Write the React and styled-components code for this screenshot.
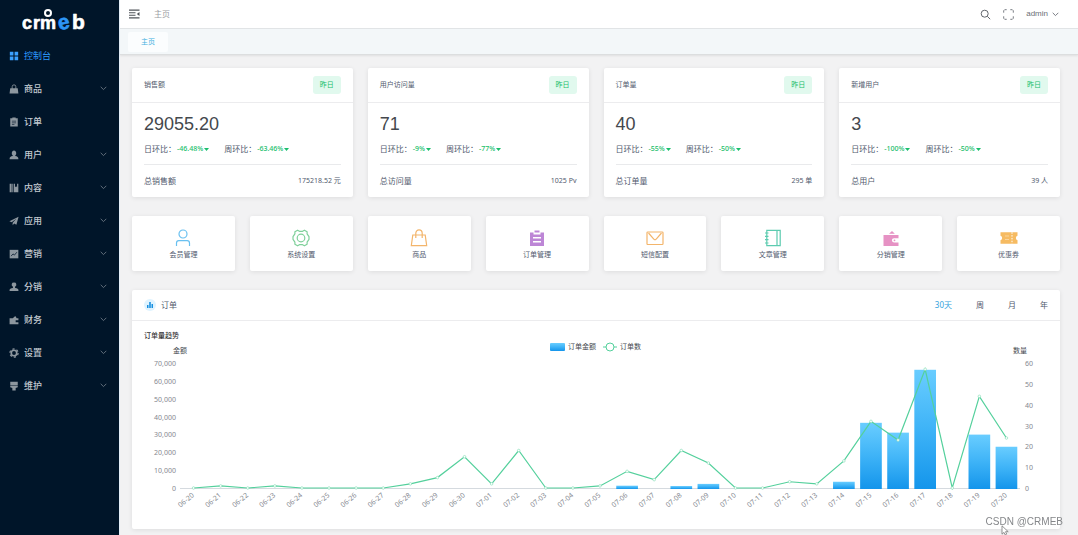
import { useState } from 'react';
import styled, { createGlobalStyle } from 'styled-components';

const GlobalStyle = createGlobalStyle`
  * {
    box-sizing: border-box;
  }
  body {
    margin: 0;
    background: #f2f2f3;
    color: #515a6e;
    font-family: "Noto Sans", "Noto Sans CJK SC", sans-serif;
    font-size: 8px;
    line-height: 12px;
  }
  button {
    margin: 0;
    padding: 0;
    border: 0;
    background: none;
    color: inherit;
    font: inherit;
    cursor: pointer;
  }
  a {
    color: inherit;
    text-decoration: none;
  }
  svg {
    display: block;
    flex: none;
  }
`;

const Layout = styled.div`
  display: flex;
  min-height: 100vh;
`;

const Sidebar = styled.aside`
  flex: none;
  width: 119px;
  background: #001529;
`;

const LogoLink = styled.a`
  display: flex;
  justify-content: center;
  height: 39px;
  padding-right: 12px;
`;

const MenuList = styled.ul`
  margin: 0;
  padding: 0;
  list-style: none;
`;

const MenuEntry = styled.a`
  display: flex;
  align-items: center;
  gap: 5px;
  width: 100%;
  height: 33px;
  padding: 0 12px 0 9px;
  color: ${(p) => (p.$active ? '#2d9bff' : '#c3cad1')};
  font-size: 9px;
  font-weight: ${(p) => (p.$active ? 400 : 500)};
  text-align: left;

  > svg:first-child {
    color: ${(p) => (p.$active ? '#3aa0ff' : '#8d979f')};
  }
  > svg:last-child:not(:first-child) {
    color: #6b7783;
  }
`;

const MenuText = styled.span`
  flex: 1;
`;

const Main = styled.div`
  display: flex;
  flex: 1;
  flex-direction: column;
  min-width: 0;
  border-left: 1px solid #e3eef8;
`;

const TopBar = styled.header`
  display: flex;
  align-items: center;
  gap: 14px;
  height: 29px;
  padding: 0 19px 0 9px;
  border-bottom: 1px solid #e2e5e7;
  background: #fff;
`;

const Crumb = styled.a`
  flex: 1;
  color: #9a9da3;
`;

const UserButton = styled.button`
  display: flex;
  align-items: center;
  gap: 4px;
  color: #6b6f76;
  font-family: "Liberation Sans", "Noto Sans CJK SC", sans-serif;
`;

const TopTools = styled.div`
  display: flex;
  align-items: center;
  gap: 12px;
`;

const TabBar = styled.div`
  display: flex;
  align-items: center;
  height: 26px;
  padding: 0 8px;
  border-bottom: 1px solid #dcdedf;
  background: #f3f7f9;
  box-shadow: 0 1px 2px rgba(0, 0, 0, 0.08);
`;

const PageTab = styled.a`
  padding: 4px 13px;
  border-radius: 2px;
  background: #fbfdfe;
  color: #3fb0e0;
  font-size: 7px;
`;

const Content = styled.main`
  display: flex;
  flex-direction: column;
  gap: 19px;
  padding: 13px 18px 6px 12px;
`;

const Grid = styled.div`
  display: grid;
  grid-template-columns: repeat(${(p) => p.$columns}, minmax(0, 1fr));
  gap: 15px;
`;

const Card = styled.section`
  border-radius: 2px;
  background: #fff;
  box-shadow: 0 1px 5px rgba(0, 0, 0, 0.09);
`;

const CardHead = styled.div`
  display: flex;
  align-items: center;
  justify-content: space-between;
  height: ${(p) => p.$height}px;
  padding: 0 12px;
  border-bottom: 1px solid #ececee;
`;

const StatTitle = styled.h2`
  margin: 0;
  font-size: 7px;
  font-weight: 400;
`;

const Badge = styled.span`
  padding: 3px 7px;
  border-radius: 3px;
  background: #e1f9ee;
  color: #19be6b;
  font-size: 7px;
`;

const StatBody = styled.div`
  padding: 11px 12px 10px;
`;

const StatNumber = styled.div`
  color: #44484d;
  font-family: "Liberation Sans", sans-serif;
  font-size: 18px;
  line-height: 20px;
`;

const RatioRow = styled.div`
  display: flex;
  gap: 15px;
  padding: 9px 0;
  border-bottom: 1px solid #e9eaec;
`;

const Ratio = styled.span`
  display: flex;
  align-items: center;
`;

const RatioValue = styled.span`
  display: flex;
  align-items: center;
  gap: 1px;
  padding-left: 1px;
  color: #19be6b;
  font-size: 7px;
  font-weight: 500;
`;

const TotalRow = styled.div`
  display: flex;
  justify-content: space-between;
  padding-top: 10px;
`;

const TotalValue = styled.span`
  font-size: 7px;
`;

const QuickLink = styled.a`
  display: flex;
  flex-direction: column;
  align-items: center;
  gap: 3px;
  padding: 13px 0 11px;
  border-radius: 2px;
  background: #fff;
  box-shadow: 0 1px 5px rgba(0, 0, 0, 0.09);
  font-size: 7px;
  line-height: 10px;

  svg {
    color: ${(p) => p.$color};
  }
`;

const ChartTitle = styled.h2`
  display: flex;
  align-items: center;
  gap: 5px;
  margin: 0;
  font-size: 8px;
  font-weight: 400;
`;

const ChartBadge = styled.span`
  display: flex;
  align-items: center;
  justify-content: center;
  width: 12px;
  height: 12px;
  border-radius: 50%;
  background: #dff3ff;
  color: #1890e0;
`;

const Periods = styled.div`
  display: flex;
  gap: 24px;
`;

const Period = styled.button`
  color: ${(p) => (p.$active ? '#35a4dd' : '#515a6e')};
`;

const ChartSvg = styled.svg`
  width: 100%;
  height: auto;

  text {
    fill: #84888f;
    font-size: 7px;
  }
  .name {
    fill: #44484f;
  }
  .title {
    fill: #333;
    font-weight: 500;
  }
`;

const Watermark = styled.div`
  position: fixed;
  right: 15px;
  bottom: 7px;
  color: #85878a;
  font-family: "Liberation Sans", sans-serif;
  font-size: 10px;
`;

const Pointer = styled.svg`
  position: fixed;
  right: 69px;
  bottom: 0;
`;

const Glyph = ({ size = 10, box = 12, children }) => (
  <svg width={size} height={size} viewBox={`0 0 ${box} ${box}`} fill="currentColor" aria-hidden="true">
    {children}
  </svg>
);

const Chevron = () => (
  <svg width="7" height="7" viewBox="0 0 7 7" fill="none" stroke="currentColor" aria-hidden="true">
    <path d="M0.7 1.8 3.5 4.6 6.3 1.8" strokeWidth="0.9" />
  </svg>
);

const Logo = () => (
  <svg width="64" height="34" viewBox="0 0 64 34" fill="#fff" stroke="#fff" strokeLinejoin="round" role="img" aria-label="crmeb">
    <g fontFamily="Liberation Sans" fontWeight="700" fontSize="18" strokeWidth="0.6">
      <text x="0" y="29">c</text>
      <text x="11" y="29">r</text>
      <text x="18" y="29">m</text>
      <text x="36" y="29" fontSize="21" fill="#2d96f5" stroke="#2d96f5" transform="rotate(-12 42 24)">e</text>
      <text x="50" y="29" fontSize="21">b</text>
    </g>
    <circle cx="26" cy="13" r="3" fill="none" strokeWidth="2" />
  </svg>
);

const menuItems = [
  {
    label: '控制台',
    active: true,
    icon: <path d="M1 1h4.300v4.300H1zM6.700 1H11v4.300H6.700zM1 6.700h4.300V11H1zM6.700 6.700H11V11H6.700z" />,
  },
  {
    label: '商品',
    children: true,
    icon: (
      <>
        <path d="M1.500 5h9l.8 6.500H.7z" />
        <path d="M3.800 6V3.200a2.200 2.200 0 0 1 4.400 0V6" fill="none" stroke="currentColor" />
      </>
    ),
  },
  {
    label: '订单',
    icon: (
      <>
        <path d="M1.500 1.500H4V.5h4v1h2.500v10h-9z" />
        <path d="M3.500 5h5M3.500 7h5M3.500 9h3" stroke="#001529" strokeWidth="0.7" />
      </>
    ),
  },
  {
    label: '用户',
    children: true,
    icon: <path d="M6 .7a2.900 3.200 0 0 1 1.500 5.800v.8c2.600.3 3.800 1.300 3.800 3.700H.7c0-2.400 1.200-3.400 3.800-3.700v-.8A2.900 3.200 0 0 1 6 .7z" />,
  },
  {
    label: '内容',
    children: true,
    icon: <path d="M.8 1h2.400v10.200H.8zM4 1h1v10.200H4zM5.800 1h1.400v4l1.300-1 1.200 1V1h1.500v10.200H5.800z" />,
  },
  {
    label: '应用',
    children: true,
    icon: <path d="M11.500.8.500 6.200l2.700 1.300 5.600-4.300-4.400 5v3l1.800-2.100 2.700 1.300z" />,
  },
  {
    label: '营销',
    children: true,
    icon: (
      <>
        <path d="M.8 1h10.400v10.200H.8z" />
        <path d="m2.500 8.500 2.300-2.600 1.700 1.400 3-3.500" fill="none" stroke="#001529" strokeWidth="0.9" />
      </>
    ),
  },
  {
    label: '分销',
    children: true,
    icon: <path d="M6 .8a2.400 2.400 0 0 1 1.500 4.500c-.5.500-.5 1.300 0 1.800 2.500.4 3.800 1.100 3.800 2.400v1.300H.7V9.500c0-1.300 1.300-2 3.800-2.400.5-.5.5-1.300 0-1.800A2.400 2.400 0 0 1 6 .8z" />,
  },
  {
    label: '财务',
    children: true,
    icon: <path d="M.7 4h3.800l3-2.800L9.300 4h2v2.300H8v2.400h3.300v2.500H.7z" />,
  },
  {
    label: '设置',
    children: true,
    icon: (
      <>
        <circle cx="6" cy="6" r="3.300" fill="none" stroke="currentColor" strokeWidth="2" />
        <circle cx="6" cy="6" r="4.900" fill="none" stroke="currentColor" strokeWidth="1.500" strokeDasharray="2.600 2.530" />
      </>
    ),
  },
  {
    label: '维护',
    children: true,
    icon: <path d="M1.500 1h9v4.300h-9zM1.500 6h9v1.500L8 8.500v2.800H4V8.500L1.500 7.500z" />,
  },
];

const stats = [
  { title: '销售额', value: '29055.20', day: '-46.48%', week: '-63.46%', total: '总销售额', sum: '175218.52 元' },
  { title: '用户访问量', value: '71', day: '-9%', week: '-77%', total: '总访问量', sum: '1025 Pv' },
  { title: '订单量', value: '40', day: '-55%', week: '-50%', total: '总订单量', sum: '295 单' },
  { title: '新增用户', value: '3', day: '-100%', week: '-50%', total: '总用户', sum: '39 人' },
];

const quickLinks = [
  {
    label: '会员管理',
    color: '#69c0f0',
    icon: (
      <g fill="none" stroke="currentColor" strokeWidth="1.200">
        <circle cx="9" cy="5" r="4" />
        <path d="M2.500 17v-3c0-1.400.8-2.300 2.300-2.300h8.400c1.500 0 2.300.9 2.300 2.300v3" />
      </g>
    ),
  },
  {
    label: '系统设置',
    color: '#7fd09a',
    icon: (
      <g fill="none" stroke="currentColor" strokeWidth="1.200" strokeLinejoin="round">
        <path d="M5.600 1.200 7.400 2.300h3.200l1.800-1.100 2.700 1.600v2l1.900 2.900v2.600l-1.900 2.900v2l-2.700 1.600-1.800-1.100H7.400l-1.800 1.100-2.700-1.600v-2L1 10.300V7.700l1.900-2.900v-2z" />
        <circle cx="9" cy="9" r="3.800" />
      </g>
    ),
  },
  {
    label: '商品',
    color: '#f3b56b',
    icon: (
      <g fill="none" stroke="currentColor" strokeWidth="1.200">
        <path d="M2.800 6h12.400l1.500 10.700H1.300z" />
        <path d="M5.800 9V4.300a3.200 3.500 0 0 1 6.400 0V9" />
      </g>
    ),
  },
  {
    label: '订单管理',
    color: '#bd86d6',
    icon: (
      <>
        <path d="M2 3.500h3.500v2h7v-2H16V17H2z" />
        <path d="M6.500 1.500h5v2h-5z" />
        <path d="M5 8.800h8M5 12.800h8" stroke="#fff" strokeWidth="1.400" />
      </>
    ),
  },
  {
    label: '短信配置',
    color: '#f3b56b',
    icon: (
      <g fill="none" stroke="currentColor" strokeWidth="1.200">
        <rect x="1" y="3" width="16" height="12.500" rx="0.800" />
        <path d="m2.500 4 5.300 6.200c.7.800 1.700.8 2.400 0L15.500 4" />
      </g>
    ),
  },
  {
    label: '文章管理',
    color: '#5ccbb0',
    icon: (
      <g fill="none" stroke="currentColor" strokeWidth="1.200">
        <path d="M2.800 1.300h13.400v15.400H2.800zM13 1.300v15.400" />
        <path d="M1 4h3.500M1 7.300h3.500M1 10.700h3.500M1 14h3.500" />
      </g>
    ),
  },
  {
    label: '分销管理',
    color: '#e692c4',
    icon: (
      <>
        <path d="M1.500 6h15v3.200H12a1.800 1.800 0 0 0 0 4.200h4.500V17h-15zM7 4.800 10 2l2.800 2.800z" />
        <circle cx="12.500" cy="11.300" r="0.900" />
      </>
    ),
  },
  {
    label: '优惠券',
    color: '#f6bb62',
    icon: (
      <>
        <path d="M.5 3.300h17v3.500a2.300 2.300 0 0 0 0 4.400v3.500H.5v-3.500a2.300 2.300 0 0 0 0-4.400z" />
        <path d="M12 3.300v11.400" stroke="#fff" strokeWidth="1" strokeDasharray="1.500 1.300" />
        <path d="M5 7h4M5 10.500h4" stroke="#fbdcae" strokeWidth="0.800" />
      </>
    ),
  },
];

const dates = [
  '06-20', '06-21', '06-22', '06-23', '06-24', '06-25', '06-26', '06-27', '06-28', '06-29', '06-30',
  '07-01', '07-02', '07-03', '07-04', '07-05', '07-06', '07-07', '07-08', '07-09', '07-10',
  '07-11', '07-12', '07-13', '07-14', '07-15', '07-16', '07-17', '07-18', '07-19', '07-20',
];
const orderCounts = [
  0, 1, 0, 1, 0, 0, 0, 0, 2, 5, 15, 2, 18, 0, 0, 1, 8, 4, 18, 12, 0, 0, 3, 2, 13, 32, 23, 57, 0, 44, 24,
];
const orderAmounts = {
  '07-06': 1300,
  '07-08': 1100,
  '07-09': 2300,
  '07-14': 3500,
  '07-15': 36500,
  '07-16': 31000,
  '07-17': 66200,
  '07-19': 29900,
  '07-20': 23100,
};

const plot = { left: 48, right: 888, top: 42, base: 167 };
const plotHeight = plot.base - plot.top;
const step = (plot.right - plot.left) / dates.length;
const centerOf = (i) => plot.left + step * (i + 0.5);
const amountHeight = (v) => (v / 70000) * plotHeight;
const countY = (v) => plot.base - (v / 60) * plotHeight;

const OrderChart = () => (
  <ChartSvg viewBox="0 0 928 208" role="img" aria-label="订单量趋势">
    <defs>
      <linearGradient id="bar" x1="0" y1="0" x2="0" y2="1">
        <stop offset="0" stopColor="#69cdff" />
        <stop offset="0.5" stopColor="#3eb3f7" />
        <stop offset="1" stopColor="#1495eb" />
      </linearGradient>
    </defs>

    <text className="title" x="12" y="17">订单量趋势</text>
    <rect x="418" y="22" width="15" height="8" rx="1" fill="url(#bar)" />
    <text className="name" x="436" y="28">订单金额</text>
    <path d="M471 26h14" stroke="#54d09c" />
    <circle cx="478" cy="26" r="4" fill="#fff" stroke="#54d09c" />
    <text className="name" x="488" y="28">订单数</text>

    <text className="name" x="48" y="32" textAnchor="middle">金额</text>
    <text className="name" x="888" y="32" textAnchor="middle">数量</text>
    {[0, 10000, 20000, 30000, 40000, 50000, 60000, 70000].map((v) => (
      <text key={v} x="44" y={plot.base - amountHeight(v) + 3} textAnchor="end">
        {v.toLocaleString('en-US')}
      </text>
    ))}
    {[0, 10, 20, 30, 40, 50, 60].map((v) => (
      <text key={v} x="893" y={countY(v) + 3}>{v}</text>
    ))}

    <rect x={plot.left} y={plot.base} width={plot.right - plot.left} height="1" fill="#d5dadf" />
    {dates.map((date, i) => (
      <g key={date}>
        {orderAmounts[date] && (
          <rect
            x={centerOf(i) - step * 0.4}
            y={plot.base - amountHeight(orderAmounts[date])}
            width={step * 0.8}
            height={amountHeight(orderAmounts[date]) + 1}
            fill="url(#bar)"
          />
        )}
        <text textAnchor="end" transform={`translate(${centerOf(i) + 1} ${plot.base + 8}) rotate(-40)`}>
          {date}
        </text>
      </g>
    ))}
    <polyline
      points={orderCounts.map((v, i) => `${centerOf(i)},${countY(v)}`).join(' ')}
      fill="none"
      stroke="#54d09c"
      strokeWidth="1.200"
    />
    {orderCounts.map((v, i) => (
      <circle key={dates[i]} cx={centerOf(i)} cy={countY(v)} r="1.300" fill="#fff" stroke="#7fdcb4" strokeWidth="0.600" />
    ))}
  </ChartSvg>
);

const RatioItem = ({ label, value }) => (
  <Ratio>
    {label}：
    <RatioValue>
      {value}
      <svg width="5" height="3" viewBox="0 0 5 3" fill="currentColor" aria-hidden="true">
        <path d="M0 0h5L2.500 3z" />
      </svg>
    </RatioValue>
  </Ratio>
);

const StatCard = ({ title, value, day, week, total, sum }) => (
  <Card>
    <CardHead $height={35}>
      <StatTitle>{title}</StatTitle>
      <Badge>昨日</Badge>
    </CardHead>
    <StatBody>
      <StatNumber>{value}</StatNumber>
      <RatioRow>
        <RatioItem label="日环比" value={day} />
        <RatioItem label="周环比" value={week} />
      </RatioRow>
      <TotalRow>
        <span>{total}</span>
        <TotalValue>{sum}</TotalValue>
      </TotalRow>
    </StatBody>
  </Card>
);

const App = () => {
  const [period, setPeriod] = useState('30天');

  return (
    <>
      <GlobalStyle />
      <Layout>
        <Sidebar>
          <LogoLink href="#">
            <Logo />
          </LogoLink>
          <nav>
            <MenuList>
              {menuItems.map((item) => (
                <li key={item.label}>
                  <MenuEntry
                    as={item.children ? 'button' : 'a'}
                    href={item.children ? undefined : '#'}
                    $active={item.active}
                  >
                    <Glyph>{item.icon}</Glyph>
                    <MenuText>{item.label}</MenuText>
                    {item.children && <Chevron />}
                  </MenuEntry>
                </li>
              ))}
            </MenuList>
          </nav>
        </Sidebar>

        <Main>
          <TopBar>
            <button type="button" aria-label="收起菜单">
              <svg width="11" height="10" viewBox="0 0 11 10" fill="#50545a">
                <path d="M0 .5h10.500v1.200H0zM0 3.200h6.500v1H0zM0 5.800h6.500v1H0zM0 8.300h10.500v1.200H0zM10.500 3v4L7.800 5z" />
              </svg>
            </button>
            <Crumb href="#">主页</Crumb>
            <TopTools>
              <button type="button" aria-label="搜索">
                <svg width="11" height="11" viewBox="0 0 11 11" fill="none" stroke="#63676d">
                  <circle cx="4.700" cy="4.700" r="3.500" />
                  <path d="m7.300 7.300 2.900 2.900" />
                </svg>
              </button>
              <button type="button" aria-label="全屏">
                <svg width="11" height="11" viewBox="0 0 11 11" fill="none" stroke="#7b7f85">
                  <path d="M.7 3.700v-2l1-1h2M7.300.7h2l1 1v2M10.300 7.300v2l-1 1h-2M3.700 10.300h-2l-1-1v-2" />
                </svg>
              </button>
              <UserButton type="button">
                admin
                <Chevron />
              </UserButton>
            </TopTools>
          </TopBar>
          <TabBar>
            <PageTab href="#">主页</PageTab>
          </TabBar>

          <Content>
            <Grid $columns={4}>
              {stats.map((stat) => (
                <StatCard key={stat.title} {...stat} />
              ))}
            </Grid>

            <Grid $columns={8}>
              {quickLinks.map((link) => (
                <QuickLink key={link.label} href="#" $color={link.color}>
                  <Glyph size={18} box={18}>{link.icon}</Glyph>
                  {link.label}
                </QuickLink>
              ))}
            </Grid>

            <Card>
              <CardHead $height={31}>
                <ChartTitle>
                  <ChartBadge>
                    <svg width="6" height="6" viewBox="0 0 6 6" fill="currentColor" aria-hidden="true">
                      <path d="M0 3h1.500v3H0zM2.200 0h1.600v6H2.200zM4.500 2H6v4H4.500z" />
                    </svg>
                  </ChartBadge>
                  订单
                </ChartTitle>
                <Periods>
                  {['30天', '周', '月', '年'].map((name) => (
                    <Period key={name} type="button" $active={name === period} onClick={() => setPeriod(name)}>
                      {name}
                    </Period>
                  ))}
                </Periods>
              </CardHead>
              <OrderChart />
            </Card>
          </Content>
        </Main>
      </Layout>
      <Watermark>CSDN @CRMEB</Watermark>
      <Pointer width="8" height="10" viewBox="0 0 8 10" fill="#fff" stroke="#777" strokeWidth="0.800" aria-hidden="true">
        <path d="M1 .8v8.400l2-1.800 1.200 2.500 1.500-.8-1.200-2.400h2.700z" />
      </Pointer>
    </>
  );
};

export default App;
